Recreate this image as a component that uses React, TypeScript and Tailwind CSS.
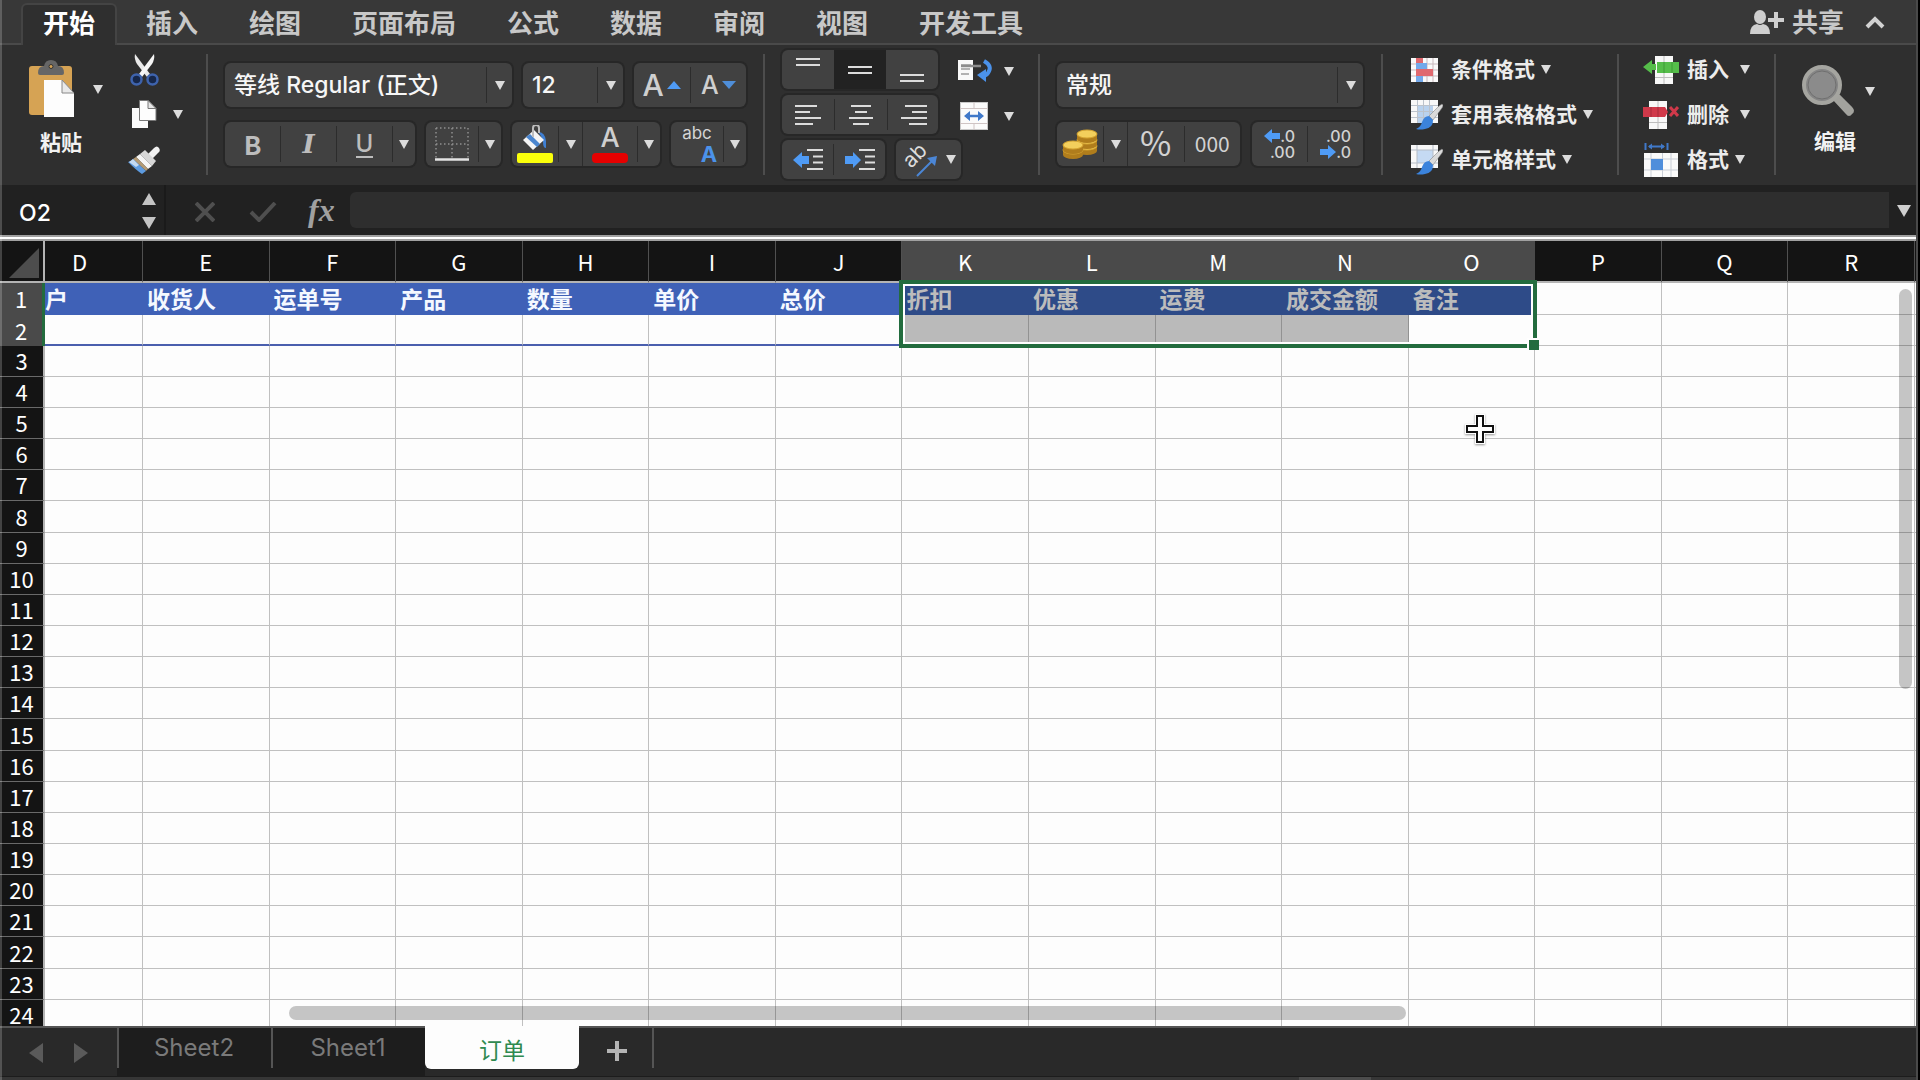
import type { ReactNode } from "react";

const SANS = "font-['Inter','Noto_Sans_CJK_SC',sans-serif]";
const CJK = "font-['Noto_Sans_CJK_SC',sans-serif]";

const ribbonTabs = ["插入", "绘图", "页面布局", "公式", "数据", "审阅", "视图", "开发工具"];

const columns = ["D", "E", "F", "G", "H", "I", "J", "K", "L", "M", "N", "O", "P", "Q", "R"];
const headings: Record<string, string> = {
  D: "户",
  E: "收货人",
  F: "运单号",
  G: "产品",
  H: "数量",
  I: "单价",
  J: "总价",
  K: "折扣",
  L: "优惠",
  M: "运费",
  N: "成交金额",
  O: "备注",
};
const rows = Array.from({ length: 24 }, (_, i) => i + 1);
const isSelectedColumn = (c: string) => "KLMNO".includes(c);

function Caret({ className = "" }: { className?: string }) {
  return (
    <svg viewBox="0 0 10 9" className={`h-[9px] w-[10px] shrink-0 fill-[#dcdcdc] ${className}`} aria-hidden="true">
      <path d="M0 0h10L5 9z" />
    </svg>
  );
}

function Separator() {
  return <div className="mt-[9px] h-[121px] w-[2px] shrink-0 bg-[#4d4d4d]" />;
}

function Box({ className = "", children }: { className?: string; children: ReactNode }) {
  return (
    <div
      className={`flex shrink-0 items-stretch rounded-md bg-[#414141] shadow-[0_0_0_2px_#272727] ${className}`}
    >
      {children}
    </div>
  );
}

function Divider({ full = false }: { full?: boolean }) {
  return <div className={`w-px shrink-0 bg-[#2c2c2c] ${full ? "" : "my-1"}`} />;
}

function Seg({ label, className = "flex-1", children }: { label: string; className?: string; children: ReactNode }) {
  return (
    <button type="button" aria-label={label} className={`flex items-center justify-center ${className}`}>
      {children}
    </button>
  );
}

function Combo({ label, value, className }: { label: string; value: string; className: string }) {
  return (
    <Box className={`h-11 ${className}`}>
      <select
        aria-label={label}
        defaultValue={value}
        className="min-w-0 flex-1 appearance-none bg-transparent pl-[9px] text-[23px] font-medium text-[#f6f6f6] outline-none"
      >
        <option value={value}>{value}</option>
      </select>
      <Divider />
      <span className="flex w-[25px] items-center justify-center">
        <Caret />
      </span>
    </Box>
  );
}

function Lines({ d }: { d: string }) {
  return (
    <svg viewBox="0 0 52 39" className="h-[39px] w-[52px]" fill="none" stroke="#dcdcdc" strokeWidth="2">
      <path d={d} />
    </svg>
  );
}

function PasteIcon() {
  return (
    <svg viewBox="0 0 46 58" className="h-[58px] w-[46px]" aria-hidden="true">
      <rect x="0" y="6" width="43" height="49" rx="3" fill="#d6a354" />
      <path d="M9 13q0-7 6-7q1-6 7-6t7 6q6 0 6 7q0 2-2 2H11q-2 0-2-2z" fill="#666" />
      <circle cx="22" cy="6.500" r="2" fill="#d6a354" stroke="#333" />
      <path d="M15 20h18l12 13v24H15z" fill="#fdfdfd" />
      <path d="M33 20v13h12z" fill="#e9e9e9" stroke="#888" strokeWidth="1" />
    </svg>
  );
}

function ScissorsIcon() {
  return (
    <svg viewBox="0 0 30 32" className="h-8 w-[30px]" aria-hidden="true">
      <path d="M5 0q-1 5 2 10l10 13 3-3z" fill="#e9e9e9" />
      <path d="M24 0q1 5-2 10L12 23l-3-3z" fill="#f6f6f6" />
      <circle cx="6.500" cy="25.500" r="5" fill="#16274a" stroke="#3e63ad" strokeWidth="2.500" />
      <circle cx="22.500" cy="25.500" r="5" fill="#16274a" stroke="#3e63ad" strokeWidth="2.500" />
    </svg>
  );
}

function CopyIcon() {
  return (
    <svg viewBox="0 0 26 28" className="h-7 w-[26px]" aria-hidden="true">
      <path d="M1 8h16v20H1z" fill="#fafafa" />
      <path d="M8.500 0.500H17l8 8v12H8.500z" fill="#fdfdfd" stroke="#777" strokeWidth="1" />
      <path d="M17 0.500v8h8z" fill="#e6e6e6" stroke="#777" strokeWidth="1" />
    </svg>
  );
}

function FormatPainterIcon() {
  return (
    <svg viewBox="0 0 32 28" className="h-7 w-8" aria-hidden="true">
      <path d="M20 8l6-6q3-3 5 0t-1 5l-6 6z" fill="#f1f1f1" />
      <path d="M12 8l5-4 11 11-4 5z" fill="#d7d7d7" />
      <path d="M12 8l12 12-4 3L8 11z" fill="#f5f5f5" />
      <path d="M8 11l12 12-2 2L5 13z" fill="#b39a74" />
      <path d="M5 13l13 12-4 3Q8 24 0 16q3 0 5-3z" fill="#5d9be0" />
      <path d="M5 13l6 6-3 2-7-5z" fill="#c4daf2" />
    </svg>
  );
}

function BordersIcon() {
  return (
    <svg viewBox="0 0 34 34" className="h-[34px] w-[34px]" aria-hidden="true" fill="none" stroke="#8f8f8f">
      <path d="M1 1h32M1 17h32M1 1v30M17 1v30M33 1v30" strokeWidth="1.500" strokeDasharray="1.500 2.500" />
      <path d="M0 32.500h34" stroke="#e3e3e3" strokeWidth="2.500" />
    </svg>
  );
}

function BucketIcon() {
  return (
    <svg viewBox="0 0 36 38" className="h-[38px] w-9" aria-hidden="true">
      <path d="M21 7q7 0 8 9v7q-3 0-3-6l-2-6z" fill="#3f7fd2" />
      <path d="M17 5L27 15 16 25 6 15z" fill="#f5f5f5" />
      <path d="M13 9l10 10-3 3L9 12z" fill="#4b86cf" />
      <path d="M16 12V3q0-3 3-3t3 3v5" fill="none" stroke="#bdbdbd" strokeWidth="2" />
      <rect x="0" y="28" width="36" height="10" rx="2" fill="#faff0a" />
    </svg>
  );
}

function WrapIcon() {
  return (
    <svg viewBox="0 0 35 24" className="h-6 w-[35px]" aria-hidden="true">
      <rect x="0" y="1" width="15" height="20" fill="#f8f8f8" />
      <path d="M3 6h10M3 10h9M3 15h8" stroke="#999" strokeWidth="1.500" />
      <path d="M3 7h20" stroke="#8c8c8c" strokeWidth="2.500" />
      <path d="M26 2q9 5 4 12q-1 2-4 3" fill="none" stroke="#4b92ea" strokeWidth="4" />
      <path d="M19 16l9-6v13z" fill="#4b92ea" />
    </svg>
  );
}

function MergeIcon() {
  return (
    <svg viewBox="0 0 28 28" className="h-7 w-7" aria-hidden="true">
      <rect x="0.500" y="0.500" width="27" height="27" fill="#fbfbfb" stroke="#c9c9c9" />
      <path d="M0 6.500h28M0 21.500h28M14 0v6M14 22v6" stroke="#cfc4c4" />
      <path d="M7 14h14" stroke="#4079c9" strokeWidth="2.500" />
      <path d="M4 14l6-5v10zM24 14l-6-5v10z" fill="#4079c9" />
    </svg>
  );
}

function IndentIcon({ dir }: { dir: "left" | "right" }) {
  return (
    <svg viewBox="0 0 30 22" className="h-[22px] w-[30px]" aria-hidden="true">
      <path d="M14 1h16M20 7.500h10M20 13.500h10M14 20h16" stroke="#dcdcdc" strokeWidth="2" />
      {dir === "left" ? (
        <path d="M0 11l9-8v4h7v8H9v4z" fill="#4f9bf5" />
      ) : (
        <path d="M16 11L8 3v4H0v8h8v4z" fill="#4f9bf5" />
      )}
    </svg>
  );
}

function OrientationIcon() {
  return (
    <svg viewBox="0 0 36 34" className="h-[34px] w-9 overflow-visible" aria-hidden="true">
      <text
        x="9"
        y="26"
        transform="rotate(-45 9 26)"
        fill="#dcdcdc"
        fontSize="21"
        className="font-['Inter',sans-serif]"
      >
        ab
      </text>
      <path d="M15 33L31 17" stroke="#4b86d6" strokeWidth="2" />
      <path d="M35 13l-2 10-8-8z" fill="#4b86d6" />
    </svg>
  );
}

function CoinsIcon() {
  const coin = (x: number, y: number) => (
    <g key={`${x}-${y}`}>
      <path d={`M${x - 10} ${y}v5a10 4 0 0 0 20 0v-5z`} fill="#b07d1c" />
      <ellipse cx={x} cy={y} rx="10" ry="4" fill="#f3cf5c" stroke="#d6a531" />
    </g>
  );
  return (
    <svg viewBox="0 0 36 30" className="h-[30px] w-9" aria-hidden="true">
      {coin(25, 17)}
      {coin(25, 11)}
      {coin(25, 5)}
      {coin(11, 21)}
      {coin(11, 16)}
    </svg>
  );
}

function SmallArrow({ dir }: { dir: "left" | "right" }) {
  return (
    <svg viewBox="0 0 16 14" className="h-[14px] w-4" aria-hidden="true" fill="#4f9bf5">
      <path d={dir === "left" ? "M0 7l8-7v4h8v6H8v4z" : "M16 7L8 0v4H0v6h8v4z"} />
    </svg>
  );
}

function ConditionalIcon() {
  return (
    <svg viewBox="0 0 32 30" className="h-[30px] w-8" aria-hidden="true">
      <rect x="0" y="3" width="27" height="24" fill="#fafafa" />
      <path d="M0 9h27M0 15h27M0 21h27M5.500 3v24M16 3v24M22 3v24" stroke="#c9b9bd" />
      <path d="M5 3h7v5H5zM5 14h17v7H5z" fill="#e0696f" />
      <path d="M5 8h11v6H5zM5 21h7v6H5z" fill="#74a9ea" />
    </svg>
  );
}

function StyleIcon({ grid }: { grid: boolean }) {
  return (
    <svg viewBox="0 0 32 30" className="h-[30px] w-8" aria-hidden="true">
      <rect x="0" y="0" width="27" height="23" fill="#f8f8f8" />
      {grid ? (
        <>
          <path d="M7 5h15v18H7z" fill="#b9d2ee" />
          <path d="M0 5.500h27M0 11.500h27M0 17.500h27M6.500 0v23M12.500 0v23M18.500 0v23" stroke="#bcc3cc" />
        </>
      ) : (
        <>
          <path d="M6 5h16v13H6z" fill="#c5daf3" />
          <path d="M0 5h27M0 18h27M6 0v23M22 0v23" stroke="#b5bcc6" />
        </>
      )}
      <path d="M31 4q2 1 0 4l-9 12-4-4L28 6z" fill="#dadada" stroke="#777" strokeWidth="0.500" />
      <path d="M18 16l4 4q0 8-8 9-5 1-9 0 5-2 6-7 2-6 7-6z" fill="#3b83dc" />
    </svg>
  );
}

function InsertCellsIcon() {
  return (
    <svg viewBox="0 0 36 30" className="h-[30px] w-9" aria-hidden="true">
      <path d="M12 1h18v28H12z" fill="#f7f7f7" />
      <path d="M21 1v28M12 22.500h18" stroke="#bdbdbd" />
      <path d="M14 7h22v11H14z" fill="#55bd4a" />
      <path d="M0 12l9-7v4h4v6H9v4z" fill="#55bd4a" />
      <path d="M21 7v11M29 7v11" stroke="#3f9a37" />
    </svg>
  );
}

function DeleteCellsIcon() {
  return (
    <svg viewBox="0 0 36 30" className="h-[30px] w-9" aria-hidden="true">
      <path d="M6 1h18v28H6z" fill="#f7f7f7" />
      <path d="M15 1v28M6 22.500h18" stroke="#bdbdbd" />
      <path d="M0 7h22l3 5-3 5H0z" fill="#d0394a" />
      <path d="M8 7v10M15 7v10" stroke="#a62c3a" />
      <path d="M27 7l8 9M35 7l-8 9" stroke="#d0394a" strokeWidth="3" />
    </svg>
  );
}

function FormatCellsIcon() {
  return (
    <svg viewBox="0 0 36 34" className="h-[34px] w-9" aria-hidden="true">
      <path d="M2.500 0v7M24.500 0v7M6 3.500h15" stroke="#4079c9" strokeWidth="2" />
      <path d="M5 3.500l4-3v6zM22 3.500l-4-3v6z" fill="#4079c9" />
      <rect x="1" y="10" width="34" height="24" fill="#fafafa" />
      <path d="M1 16h34M1 27h34M8 10v24M19.500 10v24M28 10v24" stroke="#c9ced6" />
      <path d="M8 16h12v11H8z" fill="#4f8edb" />
    </svg>
  );
}

function MagnifierIcon() {
  return (
    <svg viewBox="0 0 52 52" className="h-[52px] w-[52px]" aria-hidden="true">
      <path d="M33 35l12 13q2 3 4 0 3-2 0-5L37 31z" fill="#a3a39e" stroke="#a3a39e" strokeWidth="3" strokeLinejoin="round" />
      <circle cx="20" cy="20" r="18" fill="#858585" stroke="#a5a5a0" strokeWidth="4" />
      <circle cx="20" cy="20" r="14" fill="#8b8b8b" stroke="#6f6f6f" />
    </svg>
  );
}

function ListButton({ icon, label, gap = "ml-[6px]" }: { icon: ReactNode; label: string; gap?: string }) {
  return (
    <button type="button" className="flex h-[45px] items-center">
      {icon}
      <span className="ml-2 text-[21px] leading-none font-bold text-[#ececec]">{label}</span>
      <Caret className={gap} />
    </button>
  );
}

function TitleTabs() {
  return (
    <header className="flex h-[45px] shrink-0 items-stretch border-b-2 border-[#4a4a4a] bg-[#383838] pr-[33px] pl-[21px] text-[26px] leading-none">
      <nav className="flex items-stretch">
        <button
          type="button"
          className="mt-[3px] -mb-[2px] w-24 rounded-t-md border-2 border-b-0 border-[#444444] bg-[#2f2f2f] pb-[2px] font-bold text-white"
        >
          开始
        </button>
        <div className="ml-[29px] flex gap-[51px]">
          {ribbonTabs.map((t) => (
            <button key={t} type="button" className="pt-[5px] font-bold text-[#c8c8c8]">
              {t}
            </button>
          ))}
        </div>
      </nav>
      <div className="ml-auto flex items-center gap-[21px] pt-[2px]">
        <button type="button" className="flex items-center gap-2 font-bold text-[#c8c8c8]">
          <svg viewBox="0 0 34 25" className="h-[25px] w-[34px] fill-[#cfcfcf]" aria-hidden="true">
            <ellipse cx="10" cy="7" rx="6" ry="7" />
            <path d="M0 24q0-9 7-10 3 2 6 0 7 1 7 10z" />
            <path d="M18 8h6V2h4v6h6v4h-6v6h-4v-6h-6z" />
          </svg>
          共享
        </button>
        <button type="button" aria-label="折叠功能区">
          <svg viewBox="0 0 20 13" className="h-[13px] w-5" fill="none" stroke="#d2d2d2" strokeWidth="4">
            <path d="M2 11l8-8 8 8" />
          </svg>
        </button>
      </div>
    </header>
  );
}

function Ribbon() {
  return (
    <section className="flex h-[140px] shrink-0 items-start bg-[#2f2f2f]">
      <div className="flex w-[206px] shrink-0 pl-[29px]">
        <button type="button" className="flex w-[74px] flex-col items-center pt-[15px]">
          <span className="flex items-center gap-[18px]">
            <PasteIcon />
            <Caret />
          </span>
          <span className="mt-[14px] mr-[10px] text-[21px] leading-none font-bold text-[#f2f2f2]">粘贴</span>
        </button>
        <div className="ml-[25px] flex flex-col pt-[9px]">
          <button type="button" aria-label="剪切" className="flex h-[45px] items-start pl-[2px]">
            <ScissorsIcon />
          </button>
          <button type="button" aria-label="复制" className="flex h-[45px] items-start gap-4 pt-[1px] pl-[3px]">
            <CopyIcon />
            <Caret className="mt-[10px]" />
          </button>
          <button type="button" aria-label="格式刷" className="flex items-start pt-[2px]">
            <FormatPainterIcon />
          </button>
        </div>
      </div>
      <Separator />

      <div className="ml-[17px] flex w-[538px] shrink-0 flex-col gap-[15px] pt-[18px]">
        <div className="flex gap-[11px]">
          <Combo label="字体" value="等线 Regular (正文)" className="w-[287px]" />
          <Combo label="字号" value="12" className="w-[100px]" />
          <Box className="h-11 w-[112px]">
            <Seg label="增大字号">
              <span className="text-[30px] leading-none font-medium text-[#cfcfcf]">A</span>
              <svg viewBox="0 0 14 8" className="ml-[3px] h-2 w-[14px] fill-[#4f9bf5]">
                <path d="M0 8h14L7 0z" />
              </svg>
            </Seg>
            <Divider />
            <Seg label="减小字号">
              <span className="text-[25px] leading-none font-medium text-[#cfcfcf]">A</span>
              <svg viewBox="0 0 14 8" className="ml-[3px] h-2 w-[14px] fill-[#4f8ed8]">
                <path d="M0 0h14L7 8z" />
              </svg>
            </Seg>
          </Box>
        </div>
        <div className="flex gap-[11px]">
          <Box className="h-11 w-[190px]">
            <Seg label="加粗">
              <span className="font-['Noto_Sans_CJK_SC',sans-serif] text-[26px] leading-none font-bold text-[#bdbdbd]">B</span>
            </Seg>
            <Divider />
            <Seg label="倾斜">
              <span className="font-['DejaVu_Serif',serif] text-[26px] leading-none font-bold text-[#bdbdbd] italic">I</span>
            </Seg>
            <Divider />
            <Seg label="下划线">
              <span className="border-b-2 border-[#bdbdbd] text-[24px] leading-[25px] font-medium text-[#bdbdbd]">U</span>
            </Seg>
            <Divider />
            <Seg label="下划线样式" className="w-[22px]">
              <Caret />
            </Seg>
          </Box>
          <Box className="h-11 w-[75px]">
            <Seg label="边框">
              <BordersIcon />
            </Seg>
            <Divider />
            <Seg label="边框样式" className="w-[22px]">
              <Caret />
            </Seg>
          </Box>
          <Box className="h-11 w-[148px]">
            <Seg label="填充颜色" className="w-[46px]">
              <BucketIcon />
            </Seg>
            <Divider />
            <Seg label="选择填充颜色" className="w-[23px]">
              <Caret />
            </Seg>
            <Divider full />
            <Seg label="字体颜色" className="flex-1 flex-col">
              <span className="text-[27px] leading-6 font-medium text-[#cfcfcf]">A</span>
              <span className="mt-[3px] h-[10px] w-9 rounded-sm bg-[#e60000]" />
            </Seg>
            <Divider />
            <Seg label="选择字体颜色" className="w-[22px]">
              <Caret />
            </Seg>
          </Box>
          <Box className="h-11 w-[75px]">
            <Seg label="拼音指南" className="flex-1 flex-col">
              <span className="text-[17px] leading-5 text-[#d5d5d5]">abc</span>
              <span className="ml-6 text-[22px] leading-[22px] font-bold text-[#4b92ea]">A</span>
            </Seg>
            <Divider />
            <Seg label="拼音选项" className="w-[22px]">
              <Caret />
            </Seg>
          </Box>
        </div>
      </div>
      <Separator />

      <div className="ml-[17px] flex w-[256px] shrink-0 justify-between pt-[5px] pr-6">
        <div className="flex flex-col gap-[6px]">
          <Box className="h-[39px] w-[156px]">
            <Seg label="顶端对齐">
              <Lines d="M14 9h24M14 15h24" />
            </Seg>
            <Seg label="垂直居中" className="flex-1 bg-[#222222]">
              <Lines d="M14 17h24M14 23h24" />
            </Seg>
            <Seg label="底端对齐">
              <Lines d="M14 25h24M14 31h24" />
            </Seg>
          </Box>
          <Box className="h-[39px] w-[156px]">
            <Seg label="左对齐">
              <Lines d="M13 11h22M13 17h15M13 23h26M13 29h18" />
            </Seg>
            <Divider />
            <Seg label="居中">
              <Lines d="M16 11h20M20 17h12M14 23h24M18 29h16" />
            </Seg>
            <Divider />
            <Seg label="右对齐">
              <Lines d="M17 11h22M24 17h15M13 23h26M21 29h18" />
            </Seg>
          </Box>
          <div className="flex gap-[11px]">
            <Box className="h-[39px] w-[103px]">
              <Seg label="减少缩进">
                <IndentIcon dir="left" />
              </Seg>
              <Divider />
              <Seg label="增加缩进">
                <IndentIcon dir="right" />
              </Seg>
            </Box>
            <Box className="h-[39px] w-[65px]">
              <Seg label="方向" className="flex-1 gap-2">
                <OrientationIcon />
                <Caret />
              </Seg>
            </Box>
          </div>
        </div>
        <div className="-ml-5 flex flex-col gap-[17px] pt-[7px]">
          <button type="button" aria-label="自动换行" className="flex h-7 items-center gap-[11px]">
            <WrapIcon />
            <Caret />
          </button>
          <button type="button" aria-label="合并后居中" className="flex h-7 items-center gap-4 pl-[2px]">
            <MergeIcon />
            <Caret />
          </button>
        </div>
      </div>
      <Separator />

      <div className="ml-[17px] flex w-[324px] shrink-0 flex-col gap-[15px] pt-[18px]">
        <Combo label="数字格式" value="常规" className="w-[306px]" />
        <div className="flex gap-3">
          <Box className="h-11 w-[183px]">
            <Seg label="会计数字格式" className="w-[46px]">
              <CoinsIcon />
            </Seg>
            <Divider />
            <Seg label="货币选项" className="w-[23px]">
              <Caret />
            </Seg>
            <Divider full />
            <Seg label="百分比">
              <span className="pb-1 font-['Noto_Sans_CJK_SC',sans-serif] text-[34px] leading-none text-[#d2d2d2]">%</span>
            </Seg>
            <Divider />
            <Seg label="千位分隔">
              <span className="pb-[2px] font-['Noto_Sans_CJK_SC',sans-serif] text-[21px] leading-none text-[#d2d2d2]">000</span>
            </Seg>
          </Box>
          <Box className="h-11 w-[111px] text-[16px] leading-4 font-medium text-[#d2d2d2]">
            <Seg label="增加小数位数" className="flex-1 flex-col pr-3">
              <span className="flex items-center self-end">
                <SmallArrow dir="left" />
                .0
              </span>
              <span className="self-end">.00</span>
            </Seg>
            <Divider />
            <Seg label="减少小数位数" className="flex-1 flex-col pr-3">
              <span className="self-end">.00</span>
              <span className="flex items-center self-end">
                <SmallArrow dir="right" />
                .0
              </span>
            </Seg>
          </Box>
        </div>
      </div>
      <Separator />

      <div className="ml-7 flex w-[206px] shrink-0 flex-col pt-[2px]">
        <ListButton icon={<ConditionalIcon />} label="条件格式" />
        <ListButton icon={<StyleIcon grid />} label="套用表格格式" />
        <ListButton icon={<StyleIcon grid={false} />} label="单元格样式" />
      </div>
      <Separator />

      <div className="ml-6 flex w-[131px] shrink-0 flex-col pt-[2px]">
        <ListButton icon={<InsertCellsIcon />} label="插入" gap="ml-[11px]" />
        <ListButton icon={<DeleteCellsIcon />} label="删除" gap="ml-[11px]" />
        <ListButton icon={<FormatCellsIcon />} label="格式" />
      </div>
      <Separator />

      <button type="button" className="ml-[26px] flex flex-col items-start pt-5">
        <span className="flex items-center gap-[11px]">
          <MagnifierIcon />
          <Caret />
        </span>
        <span className="mt-[14px] ml-3 text-[21px] leading-none font-bold text-[#f2f2f2]">编辑</span>
      </button>
    </section>
  );
}

function FormulaBar() {
  return (
    <section className="flex h-[50px] shrink-0 items-stretch bg-[#212121]">
      <div className="flex w-[166px] items-center border-r-2 border-[#1a1a1a] pt-[2px] pl-[19px]">
        <input
          aria-label="名称框"
          defaultValue="O2"
          className="w-[123px] bg-transparent pt-1 text-[23px] font-medium text-white outline-none"
        />
        <svg viewBox="0 0 14 36" className="h-9 w-[14px] fill-[#c4c4c4]" aria-hidden="true">
          <path d="M7 0l7 12H0zM7 36l7-12H0z" />
        </svg>
      </div>
      <div className="flex w-[184px] items-center pt-1 pl-[29px]">
        <button type="button" aria-label="取消">
          <svg viewBox="0 0 20 20" className="h-5 w-5" fill="none" stroke="#4f4f4f" strokeWidth="4">
            <path d="M1 1l18 18M19 1L1 19" />
          </svg>
        </button>
        <button type="button" aria-label="输入" className="ml-[34px]">
          <svg viewBox="0 0 28 20" className="h-5 w-7" fill="none" stroke="#4f4f4f" strokeWidth="4">
            <path d="M2 10l8 8L26 1" />
          </svg>
        </button>
        <button
          type="button"
          aria-label="插入函数"
          className="ml-[31px] pb-1 font-['Liberation_Serif',serif] text-[32px] leading-none font-bold text-[#a0a0a0] italic"
        >
          fx
        </button>
      </div>
      <input aria-label="编辑栏" className="my-[7px] min-w-0 flex-1 rounded-l-md bg-[#2e2e2e] px-2 text-white outline-none" />
      <button type="button" aria-label="展开编辑栏" className="flex w-[29px] items-center justify-center pt-[2px]">
        <svg viewBox="0 0 14 12" className="h-3 w-[14px] fill-[#cfcfcf]">
          <path d="M0 0h14L7 12z" />
        </svg>
      </button>
    </section>
  );
}

function Selection() {
  return (
    <div className="pointer-events-none absolute -top-[3px] -left-[3px] z-10 h-[68px] w-[calc(500%+5px)] border-4 border-[#236c3e]">
      <div className="h-full w-full border-2 border-white" />
      <div className="absolute -right-[6px] -bottom-[6px] h-3 w-3 border-t-2 border-l-2 border-white bg-[#236c3e]" />
    </div>
  );
}

function bodyCellClass(column: string, row: number) {
  const selected = isSelectedColumn(column);
  if (row === 1 && headings[column]) {
    return selected ? "bg-[#2e4b88] text-[#bcbcbc]" : "bg-[#3f61b7] text-[#f4f8ff]";
  }
  if (row === 2 && selected && column !== "O") return "border-r border-b border-r-[#929292] border-b-[#c0c0c0] bg-[#bababa]";
  if (row === 2 && headings[column] && !selected) return "border-r border-b-2 border-r-[#c0c0c0] border-b-[#4a5fae] bg-[#fdfdfd]";
  return "border-r border-b border-[#c0c0c0] bg-[#fdfdfd]";
}

function Grid() {
  return (
    <main className="relative min-h-0 flex-1 overflow-hidden bg-[#fdfdfd]">
      <table className={`w-full table-fixed border-separate border-spacing-0 ${CJK}`}>
        <colgroup>
          <col className="w-[45px]" />
          <col className="w-[98px]" />
          {columns.slice(1).map((c) => (
            <col key={c} />
          ))}
          <col className="w-[3px]" />
        </colgroup>
        <thead>
          <tr className="h-[42px]">
            <th className="border-r-2 border-b-2 border-[#b4b4b4] bg-[#141414] p-0 align-bottom">
              <svg viewBox="0 0 30 30" className="mb-[3px] ml-[9px] h-[30px] w-[30px] fill-[#4d4d4d]" aria-hidden="true">
                <path d="M30 0v30H0z" />
              </svg>
            </th>
            {columns.map((c) => (
              <th
                key={c}
                scope="col"
                className={`border-r border-b-2 border-b-[#b4b4b4] p-0 text-[22px] leading-none font-normal text-white ${
                  isSelectedColumn(c) ? "border-r-[#4a4a4a] bg-[#4a4a4a]" : "border-r-[#505050] bg-[#141414]"
                } ${c === "D" ? "pr-[28px]" : ""}`}
              >
                {c}
              </th>
            ))}
            <th className="border-b-2 border-[#b4b4b4] bg-[#141414] p-0" />
          </tr>
        </thead>
        <tbody>
          {rows.map((r) => (
            <tr key={r} className={r % 7 === 1 ? "h-8" : "h-[31px]"}>
              <th
                scope="row"
                className={`p-0 pb-[2px] text-[22px] leading-[22px] font-normal text-white ${
                  r <= 2
                    ? "border-r-[3px] border-[#236c3e] bg-[#4a4a4a]"
                    : "border-r-2 border-b border-r-[#b4b4b4] border-b-[#6a6a6a] bg-[#141414]"
                }`}
              >
                {r}
              </th>
              {columns.map((c) => (
                <td
                  key={c}
                  className={`relative p-0 pb-[2px] text-[23px] leading-[23px] font-bold whitespace-nowrap ${
                    c === "D" ? "" : "pl-1"
                  } ${bodyCellClass(c, r)}`}
                >
                  {r === 1 ? headings[c] : null}
                  {r === 1 && c === "K" ? <Selection /> : null}
                </td>
              ))}
              <td className="border-b border-[#c0c0c0] p-0" />
            </tr>
          ))}
        </tbody>
      </table>
      <div className="absolute bottom-[6px] left-[289px] h-[14px] w-[1117px] rounded-full bg-black/22" />
      <div className="absolute top-12 right-[6px] h-[400px] w-[13px] rounded-full bg-black/22" />
      <svg
        viewBox="0 0 32 32"
        className="absolute top-[172px] left-[1464px] h-8 w-8 drop-shadow-[0_1px_1px_rgba(0,0,0,0.4)]"
        aria-hidden="true"
      >
        <path
          d="M13 3h6v10h10v6H19v10h-6V19H3v-6h10z"
          fill="white"
          stroke="white"
          strokeWidth="4"
        />
        <path d="M13 3h6v10h10v6H19v10h-6V19H3v-6h10z" fill="white" stroke="#111" strokeWidth="2" />
      </svg>
    </main>
  );
}

function SheetBar() {
  return (
    <footer className="flex h-[50px] shrink-0 items-start border-t-2 border-[#555555] bg-[#292929]">
      <div className="flex w-[117px] items-center gap-[31px] pt-[15px] pl-[29px]">
        <button type="button" aria-label="上一个工作表">
          <svg viewBox="0 0 14 20" className="h-5 w-[14px] fill-[#5a5a5a]">
            <path d="M14 0v20L0 10z" />
          </svg>
        </button>
        <button type="button" aria-label="下一个工作表">
          <svg viewBox="0 0 14 20" className="h-5 w-[14px] fill-[#5a5a5a]">
            <path d="M0 0v20l14-10z" />
          </svg>
        </button>
      </div>
      <div className="flex h-full bg-[#1d1d1d]">
        {["Sheet2", "Sheet1"].map((s) => (
          <button
            key={s}
            type="button"
            className="mb-2 w-[154px] border-l-2 border-[#555555] pr-[2px] text-[24px] leading-none text-[#7a7a7a]"
          >
            {s}
          </button>
        ))}
      </div>
      <button
        type="button"
        className="-mt-[2px] h-[43px] w-[154px] rounded-b-md bg-[#fdfdfd] pt-[7px] text-[23px] leading-none text-[#2f8a50]"
      >
        订单
      </button>
      <button
        type="button"
        aria-label="新建工作表"
        className="flex h-10 w-[75px] items-center justify-center border-r-2 border-[#555555] pt-[6px] pl-[2px]"
      >
        <svg viewBox="0 0 20 20" className="h-5 w-5" stroke="#b4b4b4" strokeWidth="4">
          <path d="M10 0v20M0 10h20" />
        </svg>
      </button>
    </footer>
  );
}

export default function App() {
  return (
    <div className={`h-screen overflow-hidden bg-black pr-[2px] ${SANS}`}>
      <div className="relative flex h-full flex-col overflow-hidden">
        <TitleTabs />
        <Ribbon />
        <FormulaBar />
        <div className="h-[6px] shrink-0 border-y-2 border-[#a0a0a0] bg-white" />
        <Grid />
        <SheetBar />
        <div className="flex h-1 shrink-0 border-t border-[#1c1c1c] bg-[#363636]">
          <div className="ml-[1299px] w-[72px] bg-[#4c4c4c]" />
        </div>
        <div className="pointer-events-none absolute inset-y-0 left-0 w-[2px] bg-white/20" />
        <div className="pointer-events-none absolute inset-y-0 right-0 w-[2px] bg-[#4a4a4a]" />
      </div>
    </div>
  );
}
